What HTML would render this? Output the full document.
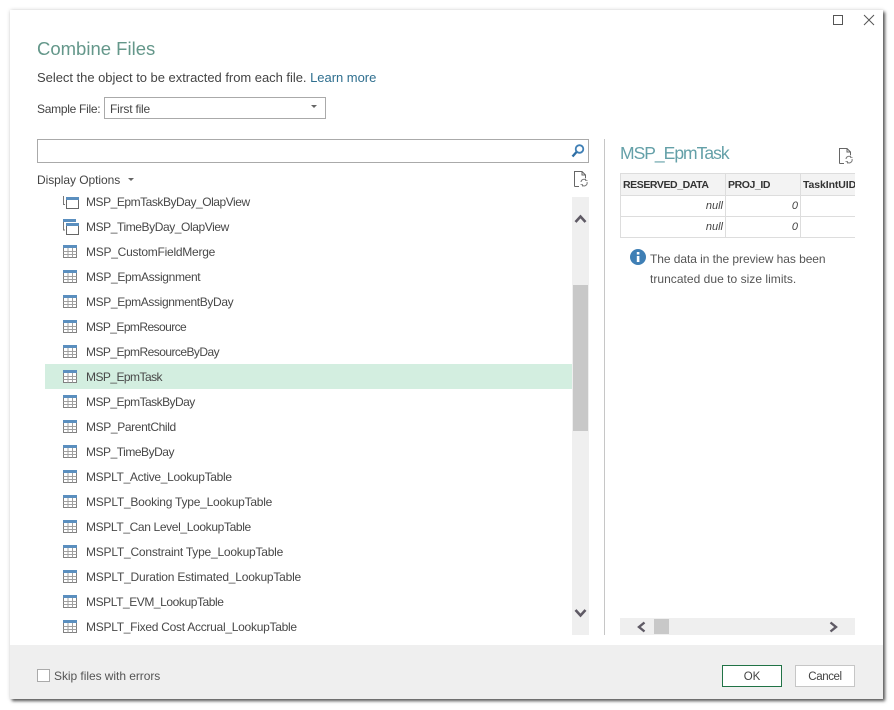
<!DOCTYPE html>
<html><head><meta charset="utf-8"><style>
html,body{margin:0;padding:0;width:894px;height:710px;background:#fff;overflow:hidden}
body{font-family:"Liberation Sans",sans-serif;color:#444;position:relative}
.a{position:absolute;white-space:nowrap}
#dlg{position:absolute;left:10px;top:10px;width:873px;height:689px;background:#fff;box-shadow:2px 2px 3px #555,0 0 4px #ddd}
#foot{position:absolute;left:10px;top:645px;width:873px;height:54px;background:#efefef}
.r{position:absolute;font-size:12px;line-height:16px;white-space:nowrap;color:#484848}
svg{position:absolute;overflow:visible}
#list{position:absolute;left:45px;top:191px;width:528px;height:444px;overflow:hidden}
#list .r{left:41px;margin-top:1px}
#list svg{left:18px}
.c{position:absolute;border-right:1px solid #ddd;border-bottom:1px solid #ddd;box-sizing:border-box;font-size:11px;white-space:nowrap;overflow:hidden}
.h{background:#f3f3f3;font-weight:bold;color:#333;line-height:22px;padding-left:2px;font-size:10.5px;height:22px;letter-spacing:-.42px}
.d{font-style:italic;text-align:right;padding-right:2px;line-height:20px;color:#444;height:21px}
</style></head><body>
<svg width="0" height="0" style="position:absolute"><defs>
<g id="t"><rect x=".5" y=".5" width="13" height="12" fill="#fff" stroke="#808080"/><rect x="0" y="0" width="14" height="3" fill="#5b8fbf"/><path d="M0.5 6.500H13.500M0.500 9.500H13.500M5 3V12.500M9.500 3V12.500" stroke="#a0a0a0" fill="none"/></g>
<g id="doc"><path d="M1.500 15.500V.500H9L12.500 4V7M9 .500V4H12.500M1.500 15.500H6" fill="none" stroke="#666"/><path d="M8 11a3 3 0 0 1 5-2M14 11a3 3 0 0 1-5 3" fill="none" stroke="#777"/><path d="M12.500 7.500v2h2M9.500 15.500v-2h-2" fill="none" stroke="#777" stroke-width=".8"/></g>
</defs></svg>
<div id="dlg"></div><div id="foot"></div>

<svg style="left:833px;top:15px" width="10" height="10"><rect x=".5" y=".5" width="9" height="9" fill="none" stroke="#555"/></svg>
<svg style="left:863px;top:14px" width="12" height="12"><path d="M1 1L11 11M11 1L1 11" stroke="#555" stroke-width="1" fill="none"/></svg>

<div class="a" style="left:37px;top:36px;font-size:18.500px;line-height:25px;color:#64978a">Combine Files</div>
<div class="a" style="left:37px;top:69px;font-size:13px;line-height:17px;color:#444;letter-spacing:-.03px">Select the object to be extracted from each file. <span style="color:#2f6f8f">Learn more</span></div>
<div class="a" style="left:37px;top:101px;font-size:12px;line-height:16px;letter-spacing:-.28px">Sample File:</div>
<div class="a" style="left:104px;top:97px;width:220px;height:20px;border:1px solid #aaa;background:#fff;font-size:12px;line-height:22px;text-indent:5px;letter-spacing:-.2px">First file</div>
<svg style="left:311px;top:105px" width="7" height="4"><path d="M0 0H6L3 3Z" fill="#666"/></svg>

<div class="a" style="left:37px;top:139px;width:550px;height:22px;border:1px solid #aaa;background:#fff"></div>
<svg style="left:571px;top:144px" width="14" height="14"><circle cx="8.500" cy="5" r="3.800" fill="none" stroke="#3f7fb5" stroke-width="1.800"/><path d="M5.500 8L1.500 12.500" stroke="#2f6fa5" stroke-width="2.400"/></svg>
<div class="a" style="left:37px;top:172px;font-size:12px;line-height:16px;letter-spacing:-.06px">Display Options</div>
<svg style="left:128px;top:178px" width="7" height="4"><path d="M0 0H6L3 3Z" fill="#666"/></svg>
<svg style="left:573px;top:171px" width="15" height="16"><use href="#doc"/></svg>

<div id="list">
<div style="position:absolute;left:0;top:173px;width:528px;height:25px;background:#d3eee0"></div>
<svg style="top:4px" width="16" height="14"><path d="M.5 1V9.500H2" fill="none" stroke="#777"/><rect x="3.500" y="2.500" width="12" height="11" fill="#fff" stroke="#666"/><rect x="3" y="2" width="13" height="3" fill="#5b8fbf"/></svg>
<div class="r" style="top:2px;letter-spacing:-.46px">MSP_EpmTaskByDay_OlapView</div>
<svg style="top:28px" width="16" height="16"><path d="M.5 1V11H2" fill="none" stroke="#777"/><rect x="0" y="0" width="13" height="3" fill="#5b8fbf"/><rect x="3.500" y="4.500" width="12" height="11" fill="#fff" stroke="#666"/><rect x="3" y="4" width="13" height="3" fill="#5b8fbf"/></svg>
<div class="r" style="top:27px;letter-spacing:-.42px">MSP_TimeByDay_OlapView</div>
<svg style="top:54px" width="14" height="13"><use href="#t"/></svg><div class="r" style="top:52px;letter-spacing:-.25px">MSP_CustomFieldMerge</div>
<svg style="top:79px" width="14" height="13"><use href="#t"/></svg><div class="r" style="top:77px;letter-spacing:-.34px">MSP_EpmAssignment</div>
<svg style="top:104px" width="14" height="13"><use href="#t"/></svg><div class="r" style="top:102px;letter-spacing:-.37px">MSP_EpmAssignmentByDay</div>
<svg style="top:129px" width="14" height="13"><use href="#t"/></svg><div class="r" style="top:127px;letter-spacing:-.57px">MSP_EpmResource</div>
<svg style="top:154px" width="14" height="13"><use href="#t"/></svg><div class="r" style="top:152px;letter-spacing:-.55px">MSP_EpmResourceByDay</div>
<svg style="top:179px" width="14" height="13"><use href="#t"/></svg><div class="r" style="top:177px;letter-spacing:-.55px">MSP_EpmTask</div>
<svg style="top:204px" width="14" height="13"><use href="#t"/></svg><div class="r" style="top:202px;letter-spacing:-.54px">MSP_EpmTaskByDay</div>
<svg style="top:229px" width="14" height="13"><use href="#t"/></svg><div class="r" style="top:227px;letter-spacing:-.37px">MSP_ParentChild</div>
<svg style="top:254px" width="14" height="13"><use href="#t"/></svg><div class="r" style="top:252px;letter-spacing:-.48px">MSP_TimeByDay</div>
<svg style="top:279px" width="14" height="13"><use href="#t"/></svg><div class="r" style="top:277px;letter-spacing:-.31px">MSPLT_Active_LookupTable</div>
<svg style="top:304px" width="14" height="13"><use href="#t"/></svg><div class="r" style="top:302px;letter-spacing:-.23px">MSPLT_Booking Type_LookupTable</div>
<svg style="top:329px" width="14" height="13"><use href="#t"/></svg><div class="r" style="top:327px;letter-spacing:-.36px">MSPLT_Can Level_LookupTable</div>
<svg style="top:354px" width="14" height="13"><use href="#t"/></svg><div class="r" style="top:352px;letter-spacing:-.22px">MSPLT_Constraint Type_LookupTable</div>
<svg style="top:379px" width="14" height="13"><use href="#t"/></svg><div class="r" style="top:377px;letter-spacing:-.21px">MSPLT_Duration Estimated_LookupTable</div>
<svg style="top:404px" width="14" height="13"><use href="#t"/></svg><div class="r" style="top:402px;letter-spacing:-.43px">MSPLT_EVM_LookupTable</div>
<svg style="top:429px" width="14" height="13"><use href="#t"/></svg><div class="r" style="top:427px;letter-spacing:-.27px">MSPLT_Fixed Cost Accrual_LookupTable</div>
</div>

<div class="a" style="left:572px;top:197px;width:17px;height:438px;background:#efefef"></div>
<div class="a" style="left:573px;top:285px;width:15px;height:146px;background:#c8c8c8"></div>
<svg style="left:574px;top:214px" width="13" height="10"><path d="M1.500 8L6.500 2.500L11.500 8" fill="none" stroke="#5f5a65" stroke-width="2.600"/></svg>
<svg style="left:574px;top:608px" width="13" height="10"><path d="M1.500 2L6.500 7.500L11.500 2" fill="none" stroke="#5f5a65" stroke-width="2.600"/></svg>

<div class="a" style="left:604px;top:139px;width:1px;height:496px;background:#c6c6c6"></div>
<div class="a" style="left:620px;top:142px;font-size:17.500px;line-height:22px;color:#64a0a8;letter-spacing:-1px">MSP_EpmTask</div>
<svg style="left:838px;top:148px" width="15" height="16"><use href="#doc"/></svg>

<div class="a" style="left:620px;top:173px;width:235px;height:65px;overflow:hidden">
<div style="position:absolute;left:0;top:0;width:235px;height:1px;background:#ddd"></div>
<div style="position:absolute;left:0;top:0;width:1px;height:65px;background:#ddd"></div>
<div class="c h" style="left:1px;top:1px;width:105px">RESERVED_DATA</div>
<div class="c h" style="left:106px;top:1px;width:75px">PROJ_ID</div>
<div class="c h" style="left:181px;top:1px;width:70px;letter-spacing:-.1px">TaskIntUID</div>
<div class="c d" style="left:1px;top:23px;width:105px">null</div>
<div class="c d" style="left:106px;top:23px;width:75px">0</div>
<div class="c d" style="left:181px;top:23px;width:70px"></div>
<div class="c d" style="left:1px;top:44px;width:105px">null</div>
<div class="c d" style="left:106px;top:44px;width:75px">0</div>
<div class="c d" style="left:181px;top:44px;width:70px"></div>
</div>

<svg style="left:630px;top:249px" width="16" height="16"><circle cx="8" cy="8" r="8" fill="#3f7fb5"/><rect x="6.800" y="7" width="2.600" height="6" fill="#fff"/><rect x="6.800" y="3" width="2.600" height="2.500" fill="#fff"/></svg>
<div class="a" style="left:650px;top:251px;font-size:12px;line-height:16px;color:#555;letter-spacing:-.06px">The data in the preview has been</div>
<div class="a" style="left:650px;top:271px;font-size:12px;line-height:16px;color:#555;letter-spacing:.03px">truncated due to size limits.</div>

<div class="a" style="left:620px;top:618px;width:235px;height:17px;background:#efefef"></div>
<div class="a" style="left:654px;top:619px;width:15px;height:15px;background:#c8c8c8"></div>
<svg style="left:636px;top:621px" width="11" height="12"><path d="M8.500 1.500L3 6L8.500 10.500" fill="none" stroke="#5f5a65" stroke-width="2.400"/></svg>
<svg style="left:828px;top:621px" width="11" height="12"><path d="M2.500 1.500L8 6L2.500 10.500" fill="none" stroke="#5f5a65" stroke-width="2.400"/></svg>

<div class="a" style="left:37px;top:669px;width:11px;height:11px;border:1px solid #aaa;background:#fff"></div>
<div class="a" style="left:54px;top:668px;font-size:12px;line-height:16px;color:#555;letter-spacing:-.05px">Skip files with errors</div>
<div class="a" style="left:722px;top:665px;width:58px;height:20px;border:1px solid #217346;background:#fff;text-align:center;font-size:11.500px;line-height:22px;color:#444">OK</div>
<div class="a" style="left:795px;top:665px;width:58px;height:20px;border:1px solid #c6c6c6;background:#fff;text-align:center;font-size:11.500px;line-height:22px;color:#444;letter-spacing:-.4px">Cancel</div>
</body></html>
